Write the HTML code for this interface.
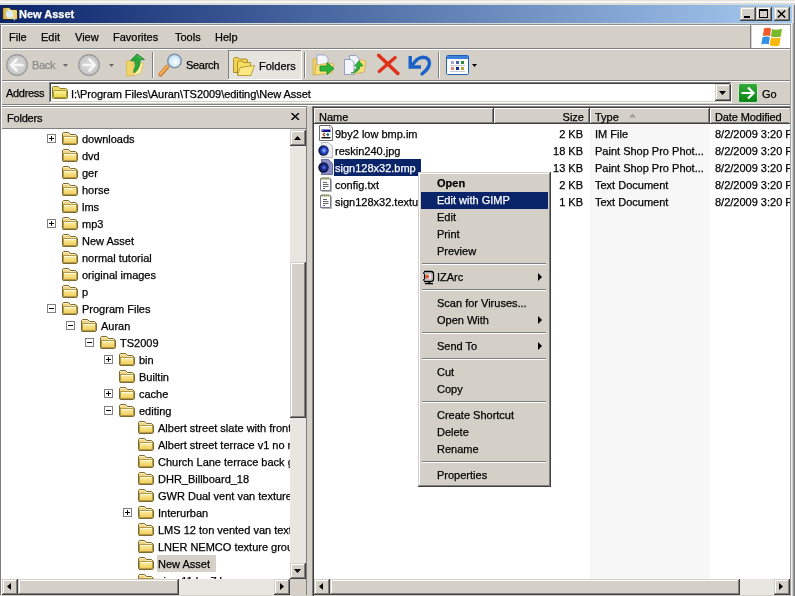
<!DOCTYPE html>
<html><head><meta charset="utf-8">
<style>
*{box-sizing:border-box;margin:0;padding:0}
html,body{width:795px;height:596px;overflow:hidden;background:#d4d0c8;font-family:"Liberation Sans",sans-serif;font-size:11px;color:#000}
.a{position:absolute}
.t{position:absolute;white-space:pre;line-height:13px;will-change:transform;-webkit-text-stroke:0.25px currentColor}
.chk{background:#e8e6e1}
.clip{position:absolute;overflow:hidden}
</style></head><body>
<div class="a" style="left:0px;top:0px;width:795px;height:5px;background:linear-gradient(#e6e2da 0,#e6e2da 1px,#f6f6f2 1px,#f6f6f2 3px,#d6dcda 3px)"></div>
<div class="a" style="left:0px;top:5px;width:792px;height:18px;background:linear-gradient(90deg,#0a246a 0%,#a6caf0 100%)"></div>
<svg class="a" style="left:2px;top:6px" width="16" height="15" viewBox="0 0 16 15"><defs><linearGradient id="tf" x1="0" y1="0" x2="1" y2="0"><stop offset="0" stop-color="#c8a030"/><stop offset="0.5" stop-color="#f6e6a0"/><stop offset="1" stop-color="#e8cc60"/></linearGradient></defs><path d="M0.5 3 L1.5 1.5 L7 1.5 L9 3.5 L14.5 3.5 L15.5 5 L15.5 13.5 L0.5 13.5 Z" fill="url(#tf)" stroke="#1a1a20" stroke-width="0.8"/><circle cx="7.5" cy="8" r="3.6" fill="#d8ecfc"/><path d="M11 12 L13 14" stroke="#c8d0e0" stroke-width="1.5"/></svg>
<div class="t" style="left:19px;top:8px;color:#fff;font-weight:bold">New Asset</div>
<div class="a" style="left:740px;top:7px;width:16px;height:14px;background:#d4d0c8"></div><div class="a" style="left:741px;top:8px;width:13px;height:1px;background:#ffffff"></div><div class="a" style="left:741px;top:8px;width:1px;height:11px;background:#ffffff"></div><div class="a" style="left:740px;top:20px;width:16px;height:1px;background:#404040"></div><div class="a" style="left:755px;top:7px;width:1px;height:14px;background:#404040"></div><div class="a" style="left:741px;top:19px;width:14px;height:1px;background:#808080"></div><div class="a" style="left:754px;top:8px;width:1px;height:12px;background:#808080"></div>
<div class="a" style="left:756px;top:7px;width:16px;height:14px;background:#d4d0c8"></div><div class="a" style="left:757px;top:8px;width:13px;height:1px;background:#ffffff"></div><div class="a" style="left:757px;top:8px;width:1px;height:11px;background:#ffffff"></div><div class="a" style="left:756px;top:20px;width:16px;height:1px;background:#404040"></div><div class="a" style="left:771px;top:7px;width:1px;height:14px;background:#404040"></div><div class="a" style="left:757px;top:19px;width:14px;height:1px;background:#808080"></div><div class="a" style="left:770px;top:8px;width:1px;height:12px;background:#808080"></div>
<div class="a" style="left:774px;top:7px;width:16px;height:14px;background:#d4d0c8"></div><div class="a" style="left:775px;top:8px;width:13px;height:1px;background:#ffffff"></div><div class="a" style="left:775px;top:8px;width:1px;height:11px;background:#ffffff"></div><div class="a" style="left:774px;top:20px;width:16px;height:1px;background:#404040"></div><div class="a" style="left:789px;top:7px;width:1px;height:14px;background:#404040"></div><div class="a" style="left:775px;top:19px;width:14px;height:1px;background:#808080"></div><div class="a" style="left:788px;top:8px;width:1px;height:12px;background:#808080"></div>
<div class="a" style="left:744px;top:16px;width:6px;height:2px;background:#000"></div>
<div class="a" style="left:759px;top:9px;width:9px;height:9px;border:1px solid #000;border-top-width:2px"></div>
<svg class="a" style="left:777px;top:10px" width="10" height="8" viewBox="0 0 10 8"><path d="M0.8 0.5 L8.2 7.5 M8.2 0.5 L0.8 7.5" stroke="#000" stroke-width="1.5"/></svg>
<div class="a" style="left:790px;top:23px;width:5px;height:573px;background:linear-gradient(90deg,#a0a09e 0,#a0a09e 1px,#eeeeec 1px,#eeeeec 2px,#d0d0ce 2px,#c4c4c2 3px,#787878 4px)"></div>
<div class="a" style="left:792px;top:5px;width:3px;height:18px;background:linear-gradient(90deg,#e2e6ea 0,#e2e6ea 1px,#c8ccd0 1px,#c8ccd0 2px,#787878 2px)"></div>
<div class="a" style="left:0px;top:23px;width:1px;height:573px;background:#7c7c7c"></div>
<div class="a" style="left:1px;top:25px;width:1px;height:571px;background:#fff"></div>
<div class="a" style="left:0px;top:23px;width:791px;height:1px;background:#d0d8d8"></div>
<div class="a" style="left:0px;top:24px;width:791px;height:1px;background:#8c9090"></div>
<div class="a" style="left:2px;top:25px;width:788px;height:1px;background:#fff"></div>
<div class="a" style="left:2px;top:48px;width:788px;height:1px;background:#808080"></div>
<div class="a" style="left:2px;top:49px;width:788px;height:1px;background:#fff"></div>
<div class="t" style="left:9px;top:31px;">File</div>
<div class="t" style="left:41px;top:31px;">Edit</div>
<div class="t" style="left:75px;top:31px;">View</div>
<div class="t" style="left:113px;top:31px;">Favorites</div>
<div class="t" style="left:175px;top:31px;">Tools</div>
<div class="t" style="left:215px;top:31px;">Help</div>
<div class="a" style="left:750px;top:25px;width:1px;height:24px;background:#808080"></div>
<div class="a" style="left:752px;top:25px;width:38px;height:23px;background:#fff"></div>
<svg class="a" style="left:760px;top:27px" width="23" height="20" viewBox="0 0 23 20"><path d="M4 1.5 Q7.5 0 11 1.5 L10 9 Q6.5 7.8 2.8 9 Z" fill="#f05a28"/><path d="M12 2 Q15.5 3.5 22 1.8 L20.8 9.6 Q15.5 11 11 9.6 Z" fill="#79b829"/><path d="M2.6 10 Q6.5 8.8 9.8 10 L8.8 17.5 Q5 16.2 1.2 17.5 Z" fill="#3490e0"/><path d="M10.8 10.6 Q15.5 12 20.6 10.5 L19.4 18.5 Q14.5 20 9.8 18.2 Z" fill="#f9b90c"/></svg>
<div class="a" style="left:2px;top:80px;width:788px;height:1px;background:#808080"></div>
<div class="a" style="left:2px;top:81px;width:788px;height:1px;background:#fff"></div>
<svg class="a" style="left:6px;top:54px" width="22" height="22" viewBox="0 0 22 22"><defs><radialGradient id="gb" cx="50%" cy="50%" r="55%"><stop offset="0" stop-color="#dcdcdc"/><stop offset="0.75" stop-color="#cacaca"/><stop offset="1" stop-color="#a4a4a4"/></radialGradient></defs><circle cx="11" cy="11" r="10.4" fill="url(#gb)" stroke="#9a9a9a" stroke-width="1.1"/><path d="M10.5 5.5 L5.2 11 L10.5 16.5 M6 11 L16.5 11" stroke="#f6f6f6" stroke-width="2.6" fill="none" stroke-linecap="round" stroke-linejoin="round"/></svg>
<div class="t" style="left:32px;top:59px;color:#8a8a8a;letter-spacing:-0.3px">Back</div>
<svg class="a" style="left:63px;top:64px" width="6" height="4"><path d="M0 0 L5 0 L2.5 3 Z" fill="#6a6a6a"/></svg>
<svg class="a" style="left:78px;top:54px" width="22" height="22" viewBox="0 0 22 22"><circle cx="11" cy="11" r="10.4" fill="url(#gb)" stroke="#9a9a9a" stroke-width="1.1"/><path d="M11.5 5.5 L16.8 11 L11.5 16.5 M16 11 L5.5 11" stroke="#f6f6f6" stroke-width="2.6" fill="none" stroke-linecap="round" stroke-linejoin="round"/></svg>
<svg class="a" style="left:109px;top:64px" width="6" height="4"><path d="M0 0 L5 0 L2.5 3 Z" fill="#6a6a6a"/></svg>
<svg class="a" style="left:120px;top:50px" width="30" height="30" viewBox="0 0 30 30"><path d="M6 11.5 L11 10.5 L14 12.5 L14.5 25 L7 26.5 Z" fill="#f0d468" stroke="#d4b040" stroke-width="0.7"/><path d="M13.5 13.5 L23.5 13 L20.5 23.5 L13.5 25.5 Z" fill="#fbeea0" stroke="#d8bc50" stroke-width="0.7"/><path d="M10.5 10.5 L17 4 L24.5 9.5 L20 10 Q20.5 18 14.5 23 L13.5 21.5 Q16 17 15 11 Z" fill="#28a838" stroke="#187a22" stroke-width="0.7"/><path d="M17 5.5 L21.5 9" stroke="#70d070" stroke-width="0.8"/></svg>
<div class="a" style="left:152px;top:52px;width:1px;height:26px;background:#808080"></div>
<div class="a" style="left:153px;top:52px;width:1px;height:26px;background:#fff"></div>
<svg class="a" style="left:155px;top:50px" width="32" height="30" viewBox="0 0 32 30"><defs><radialGradient id="gl" cx="55%" cy="55%" r="60%"><stop offset="0" stop-color="#ffffff"/><stop offset="1" stop-color="#b0dcf4"/></radialGradient></defs><path d="M5.5 24.5 L12 17" stroke="#c87838" stroke-width="4.2" stroke-linecap="round"/><path d="M5.5 24 L12 16.5" stroke="#f4b050" stroke-width="2.4" stroke-linecap="round"/><circle cx="19.5" cy="11" r="6.8" fill="url(#gl)" stroke="#8496a8" stroke-width="1.6"/></svg>
<div class="t" style="left:186px;top:59px;letter-spacing:-0.3px">Search</div>
<div class="a" style="left:228px;top:50px;width:74px;height:30px;background:#e6e4df"></div>
<div class="a" style="left:228px;top:50px;width:74px;height:1px;background:#808080"></div>
<div class="a" style="left:228px;top:50px;width:1px;height:30px;background:#808080"></div>
<div class="a" style="left:228px;top:79px;width:74px;height:1px;background:#fff"></div>
<div class="a" style="left:301px;top:50px;width:1px;height:30px;background:#fff"></div>
<svg class="a" style="left:228px;top:50px" width="32" height="30" viewBox="0 0 32 30"><path d="M5.5 8.5 L6.5 7.5 L10 7.5 L11.5 9 L18.5 9 L19.5 10 L19.5 22.5 L5.5 22.5 Z" fill="#f2d050" stroke="#a88828" stroke-width="0.9"/><path d="M9.5 12 L10.5 11 L14 11 L15.5 12.5 L22.5 12.5 L22.5 25.5 L9.5 25.5 Z" fill="#f6dc60" stroke="#a88828" stroke-width="0.9"/><path d="M12 17.5 L26.5 15.5 L23 25.5 L9.5 25.5 Z" fill="#fbea84" stroke="#b89838" stroke-width="0.9"/></svg>
<div class="t" style="left:259px;top:60px;">Folders</div>
<div class="a" style="left:304px;top:52px;width:1px;height:26px;background:#808080"></div>
<div class="a" style="left:305px;top:52px;width:1px;height:26px;background:#fff"></div>
<svg class="a" style="left:312px;top:53px" width="24" height="24" viewBox="0 0 24 24"><path d="M1 6 L5 5 L5 21 L1 22 Z" fill="#f0d060" stroke="#c8a040" stroke-width="0.6"/><path d="M5 2 L13 2 L16 5 L16 17 L5 17 Z" fill="#f4f6fc" stroke="#90a0c8" stroke-width="0.8"/><path d="M4 12 L18 10 L22 11 L20 20 L3 22 Z" fill="#f6e07a" stroke="#c8a040" stroke-width="0.6"/><path d="M8 13 L15 13 L15 9.5 L22 15.5 L15 21.5 L15 18 L8 18 Z" fill="#2cb43c" stroke="#168a22" stroke-width="0.8"/></svg>
<svg class="a" style="left:343px;top:53px" width="24" height="24" viewBox="0 0 24 24"><path d="M11 8 L19 7 L23 8 L21 19 L10 21 Z" fill="#f6e07a" stroke="#c8a040" stroke-width="0.6"/><path d="M6.5 2.5 L13 2.5 L16 5.5 L16 16.5 L6.5 16.5 Z" fill="#eef2fa" stroke="#8090b8" stroke-width="0.8"/><path d="M1.5 6.5 L8 6.5 L11 9.5 L11 21.5 L1.5 21.5 Z" fill="#f4f6fc" stroke="#8090b8" stroke-width="0.8"/><path d="M8 20 Q13 19 14 13 L11.5 13 L16 8 L20 13 L17 13 Q16 20 8 20 Z" fill="#2cb43c" stroke="#168a22" stroke-width="0.7"/></svg>
<svg class="a" style="left:370px;top:50px" width="34" height="30" viewBox="0 0 34 30"><path d="M8.8 5.5 L27.8 23.5" stroke="#e03018" stroke-width="3.6" stroke-linecap="round"/><path d="M25.2 7.5 L9.2 21.5" stroke="#e03018" stroke-width="3.2" stroke-linecap="round"/></svg>
<svg class="a" style="left:400px;top:50px" width="32" height="30" viewBox="0 0 32 30"><path d="M12.5 15 Q17 7.5 23 7.2 Q29.5 7.5 29.5 13.5 Q29 18.5 22 24" stroke="#1a62c8" stroke-width="3.4" fill="none" stroke-linecap="round"/><path d="M10.2 6 L10.2 17 L21 17" stroke="#1a62c8" stroke-width="3.4" fill="none" stroke-linejoin="miter" stroke-linecap="butt"/></svg>
<div class="a" style="left:438px;top:52px;width:1px;height:26px;background:#808080"></div>
<div class="a" style="left:439px;top:52px;width:1px;height:26px;background:#fff"></div>
<svg class="a" style="left:446px;top:55px" width="24" height="21" viewBox="0 0 24 21"><rect x="0.5" y="0.5" width="22" height="19" rx="1" fill="#fff" stroke="#2060b8"/><rect x="1" y="1" width="21" height="3" fill="#3c82dc"/><rect x="5" y="6" width="3" height="3" fill="#a8a8c8"/><rect x="10" y="6" width="3" height="3" fill="#4a68a8"/><rect x="15" y="6" width="3" height="3" fill="#2a8a3a"/><rect x="5" y="12" width="3" height="3" fill="#e88878"/><rect x="10" y="12" width="3" height="3" fill="#142a8a"/><rect x="15" y="12" width="3" height="3" fill="#b8a838"/><rect x="4" y="10" width="5" height="1" fill="#c8c8d8"/><rect x="9" y="10" width="5" height="1" fill="#c8c8d8"/><rect x="14" y="10" width="5" height="1" fill="#c8c8d8"/><rect x="4" y="16" width="5" height="1" fill="#c8c8d8"/><rect x="9" y="16" width="5" height="1" fill="#c8c8d8"/><rect x="14" y="16" width="5" height="1" fill="#c8c8d8"/></svg>
<svg class="a" style="left:472px;top:64px" width="6" height="4"><path d="M0 0 L5 0 L2.5 3 Z" fill="#000"/></svg>
<div class="a" style="left:2px;top:104px;width:788px;height:1px;background:#808080"></div>
<div class="a" style="left:2px;top:105px;width:788px;height:1px;background:#fff"></div>
<div class="t" style="left:6px;top:87px;letter-spacing:-0.3px">Address</div>
<div class="a" style="left:49px;top:82px;width:683px;height:21px;background:#fff;border-style:solid;border-width:1px;border-color:#808080 #fff #fff #808080"></div>
<div class="a" style="left:50px;top:83px;width:681px;height:1px;background:#404040"></div>
<div class="a" style="left:50px;top:83px;width:1px;height:19px;background:#404040"></div>
<div class="a" style="left:50px;top:101px;width:681px;height:1px;background:#d4d0c8"></div>
<div class="a" style="left:730px;top:83px;width:1px;height:19px;background:#d4d0c8"></div>
<svg class="a" style="left:52px;top:86px" width="16" height="13" viewBox="0 0 16 13"><defs><linearGradient id="fa" x1="0" y1="0" x2="0" y2="1"><stop offset="0" stop-color="#fbf4a0"/><stop offset="1" stop-color="#ecd444"/></linearGradient></defs><path d="M1.5 12.5 Q0.5 12.5 0.5 11.5 L0.5 1.5 Q0.5 0.5 1.5 0.5 L6 0.5 L8 2.5 L13.5 2.5 Q15.5 3 15.5 5 L15.5 11 Q15.5 12.5 14 12.5 Z" fill="#f0dc68" stroke="#8a8030"/><rect x="1.5" y="4.5" width="13" height="7" rx="1" fill="url(#fa)" stroke="#a89838"/></svg>
<div class="t" style="left:71px;top:88px;letter-spacing:-0.05px">I:\Program Files\Auran\TS2009\editing\New Asset</div>
<div class="a" style="left:715px;top:84px;width:16px;height:17px;background:#d4d0c8"></div><div class="a" style="left:716px;top:85px;width:13px;height:1px;background:#ffffff"></div><div class="a" style="left:716px;top:85px;width:1px;height:14px;background:#ffffff"></div><div class="a" style="left:715px;top:100px;width:16px;height:1px;background:#404040"></div><div class="a" style="left:730px;top:84px;width:1px;height:17px;background:#404040"></div><div class="a" style="left:716px;top:99px;width:14px;height:1px;background:#808080"></div><div class="a" style="left:729px;top:85px;width:1px;height:15px;background:#808080"></div>
<svg class="a" style="left:719px;top:91px" width="8" height="5"><path d="M0 0 L7 0 L3.5 4 Z" fill="#000"/></svg>
<svg class="a" style="left:738px;top:83px" width="20" height="20" viewBox="0 0 20 20"><defs><linearGradient id="gg" x1="0" y1="0" x2="0" y2="1"><stop offset="0" stop-color="#38aa3c"/><stop offset="1" stop-color="#088414"/></linearGradient></defs><rect x="0.5" y="0.5" width="19" height="19" rx="2" fill="url(#gg)" stroke="#d0ecd0"/><path d="M3.5 10 L15 10 M10 4.5 L15.5 10 L10 15.5" stroke="#fff" stroke-width="2.2" fill="none"/></svg>
<div class="t" style="left:762px;top:88px;">Go</div>
<div class="a" style="left:2px;top:106px;width:305px;height:23px;background:#d4d0c8"></div>
<div class="a" style="left:2px;top:106px;width:304px;height:1px;background:#808080"></div>
<div class="a" style="left:2px;top:107px;width:304px;height:1px;background:#fff"></div>
<div class="a" style="left:2px;top:128px;width:305px;height:1px;background:#808080"></div>
<div class="a" style="left:306px;top:106px;width:1px;height:23px;background:#808080"></div>
<div class="t" style="left:7px;top:112px;letter-spacing:-0.2px">Folders</div>
<svg class="a" style="left:291px;top:113px" width="9" height="7" viewBox="0 0 9 7"><path d="M0.5 0 L8 7 M8 0 L0.5 7" stroke="#000" stroke-width="1.4"/></svg>
<div class="a" style="left:2px;top:129px;width:288px;height:450px;background:#fff"></div>
<div class="a" style="left:306px;top:129px;width:1px;height:467px;background:#808080"></div>
<svg width="0" height="0" style="position:absolute"><defs><linearGradient id="fy" x1="0" y1="0" x2="0" y2="1"><stop offset="0" stop-color="#fdf0a8"/><stop offset="1" stop-color="#efcc58"/></linearGradient></defs></svg>
<div class="clip" style="left:2px;top:129px;width:288px;height:450px"><div class="a" style="left:-2px;top:-129px;width:795px;height:596px"><div class="a" style="left:47px;top:134px;width:9px;height:9px;background:#fff;border:1px solid #808080"></div><div class="a" style="left:49px;top:138px;width:5px;height:1px;background:#000"></div><div class="a" style="left:51px;top:136px;width:1px;height:5px;background:#000"></div>
<svg class="a" style="left:62px;top:132px" width="16" height="13" viewBox="0 0 16 13"><path d="M1 12.5 L0.5 11.5 L0.5 1.5 L1.5 0.5 L6.5 0.5 L8.5 2.5 L13.5 2.5 L15.5 4.5 L15.5 11.5 L14.5 12.5 Z" fill="#eed484" stroke="#7c6a30"/><path d="M1.5 1.5 L6 1.5 L8 3.5 L13.5 3.5" stroke="#fbf0c0" fill="none"/><rect x="1.5" y="4.5" width="13" height="7" fill="url(#fy)" stroke="#b49a48"/><path d="M2 5.5 L14 5.5" stroke="#fffbe0"/></svg>
<div class="t" style="left:82px;top:133px;">downloads</div>
<svg class="a" style="left:62px;top:149px" width="16" height="13" viewBox="0 0 16 13"><path d="M1 12.5 L0.5 11.5 L0.5 1.5 L1.5 0.5 L6.5 0.5 L8.5 2.5 L13.5 2.5 L15.5 4.5 L15.5 11.5 L14.5 12.5 Z" fill="#eed484" stroke="#7c6a30"/><path d="M1.5 1.5 L6 1.5 L8 3.5 L13.5 3.5" stroke="#fbf0c0" fill="none"/><rect x="1.5" y="4.5" width="13" height="7" fill="url(#fy)" stroke="#b49a48"/><path d="M2 5.5 L14 5.5" stroke="#fffbe0"/></svg>
<div class="t" style="left:82px;top:150px;">dvd</div>
<svg class="a" style="left:62px;top:166px" width="16" height="13" viewBox="0 0 16 13"><path d="M1 12.5 L0.5 11.5 L0.5 1.5 L1.5 0.5 L6.5 0.5 L8.5 2.5 L13.5 2.5 L15.5 4.5 L15.5 11.5 L14.5 12.5 Z" fill="#eed484" stroke="#7c6a30"/><path d="M1.5 1.5 L6 1.5 L8 3.5 L13.5 3.5" stroke="#fbf0c0" fill="none"/><rect x="1.5" y="4.5" width="13" height="7" fill="url(#fy)" stroke="#b49a48"/><path d="M2 5.5 L14 5.5" stroke="#fffbe0"/></svg>
<div class="t" style="left:82px;top:167px;">ger</div>
<svg class="a" style="left:62px;top:183px" width="16" height="13" viewBox="0 0 16 13"><path d="M1 12.5 L0.5 11.5 L0.5 1.5 L1.5 0.5 L6.5 0.5 L8.5 2.5 L13.5 2.5 L15.5 4.5 L15.5 11.5 L14.5 12.5 Z" fill="#eed484" stroke="#7c6a30"/><path d="M1.5 1.5 L6 1.5 L8 3.5 L13.5 3.5" stroke="#fbf0c0" fill="none"/><rect x="1.5" y="4.5" width="13" height="7" fill="url(#fy)" stroke="#b49a48"/><path d="M2 5.5 L14 5.5" stroke="#fffbe0"/></svg>
<div class="t" style="left:82px;top:184px;">horse</div>
<svg class="a" style="left:62px;top:200px" width="16" height="13" viewBox="0 0 16 13"><path d="M1 12.5 L0.5 11.5 L0.5 1.5 L1.5 0.5 L6.5 0.5 L8.5 2.5 L13.5 2.5 L15.5 4.5 L15.5 11.5 L14.5 12.5 Z" fill="#eed484" stroke="#7c6a30"/><path d="M1.5 1.5 L6 1.5 L8 3.5 L13.5 3.5" stroke="#fbf0c0" fill="none"/><rect x="1.5" y="4.5" width="13" height="7" fill="url(#fy)" stroke="#b49a48"/><path d="M2 5.5 L14 5.5" stroke="#fffbe0"/></svg>
<div class="t" style="left:82px;top:201px;">lms</div>
<div class="a" style="left:47px;top:219px;width:9px;height:9px;background:#fff;border:1px solid #808080"></div><div class="a" style="left:49px;top:223px;width:5px;height:1px;background:#000"></div><div class="a" style="left:51px;top:221px;width:1px;height:5px;background:#000"></div>
<svg class="a" style="left:62px;top:217px" width="16" height="13" viewBox="0 0 16 13"><path d="M1 12.5 L0.5 11.5 L0.5 1.5 L1.5 0.5 L6.5 0.5 L8.5 2.5 L13.5 2.5 L15.5 4.5 L15.5 11.5 L14.5 12.5 Z" fill="#eed484" stroke="#7c6a30"/><path d="M1.5 1.5 L6 1.5 L8 3.5 L13.5 3.5" stroke="#fbf0c0" fill="none"/><rect x="1.5" y="4.5" width="13" height="7" fill="url(#fy)" stroke="#b49a48"/><path d="M2 5.5 L14 5.5" stroke="#fffbe0"/></svg>
<div class="t" style="left:82px;top:218px;">mp3</div>
<svg class="a" style="left:62px;top:234px" width="16" height="13" viewBox="0 0 16 13"><path d="M1 12.5 L0.5 11.5 L0.5 1.5 L1.5 0.5 L6.5 0.5 L8.5 2.5 L13.5 2.5 L15.5 4.5 L15.5 11.5 L14.5 12.5 Z" fill="#eed484" stroke="#7c6a30"/><path d="M1.5 1.5 L6 1.5 L8 3.5 L13.5 3.5" stroke="#fbf0c0" fill="none"/><rect x="1.5" y="4.5" width="13" height="7" fill="url(#fy)" stroke="#b49a48"/><path d="M2 5.5 L14 5.5" stroke="#fffbe0"/></svg>
<div class="t" style="left:82px;top:235px;">New Asset</div>
<svg class="a" style="left:62px;top:251px" width="16" height="13" viewBox="0 0 16 13"><path d="M1 12.5 L0.5 11.5 L0.5 1.5 L1.5 0.5 L6.5 0.5 L8.5 2.5 L13.5 2.5 L15.5 4.5 L15.5 11.5 L14.5 12.5 Z" fill="#eed484" stroke="#7c6a30"/><path d="M1.5 1.5 L6 1.5 L8 3.5 L13.5 3.5" stroke="#fbf0c0" fill="none"/><rect x="1.5" y="4.5" width="13" height="7" fill="url(#fy)" stroke="#b49a48"/><path d="M2 5.5 L14 5.5" stroke="#fffbe0"/></svg>
<div class="t" style="left:82px;top:252px;">normal tutorial</div>
<svg class="a" style="left:62px;top:268px" width="16" height="13" viewBox="0 0 16 13"><path d="M1 12.5 L0.5 11.5 L0.5 1.5 L1.5 0.5 L6.5 0.5 L8.5 2.5 L13.5 2.5 L15.5 4.5 L15.5 11.5 L14.5 12.5 Z" fill="#eed484" stroke="#7c6a30"/><path d="M1.5 1.5 L6 1.5 L8 3.5 L13.5 3.5" stroke="#fbf0c0" fill="none"/><rect x="1.5" y="4.5" width="13" height="7" fill="url(#fy)" stroke="#b49a48"/><path d="M2 5.5 L14 5.5" stroke="#fffbe0"/></svg>
<div class="t" style="left:82px;top:269px;">original images</div>
<svg class="a" style="left:62px;top:285px" width="16" height="13" viewBox="0 0 16 13"><path d="M1 12.5 L0.5 11.5 L0.5 1.5 L1.5 0.5 L6.5 0.5 L8.5 2.5 L13.5 2.5 L15.5 4.5 L15.5 11.5 L14.5 12.5 Z" fill="#eed484" stroke="#7c6a30"/><path d="M1.5 1.5 L6 1.5 L8 3.5 L13.5 3.5" stroke="#fbf0c0" fill="none"/><rect x="1.5" y="4.5" width="13" height="7" fill="url(#fy)" stroke="#b49a48"/><path d="M2 5.5 L14 5.5" stroke="#fffbe0"/></svg>
<div class="t" style="left:82px;top:286px;">p</div>
<div class="a" style="left:47px;top:304px;width:9px;height:9px;background:#fff;border:1px solid #808080"></div><div class="a" style="left:49px;top:308px;width:5px;height:1px;background:#000"></div>
<svg class="a" style="left:62px;top:302px" width="16" height="13" viewBox="0 0 16 13"><path d="M1 12.5 L0.5 11.5 L0.5 1.5 L1.5 0.5 L6.5 0.5 L8.5 2.5 L13.5 2.5 L15.5 4.5 L15.5 11.5 L14.5 12.5 Z" fill="#eed484" stroke="#7c6a30"/><path d="M1.5 1.5 L6 1.5 L8 3.5 L13.5 3.5" stroke="#fbf0c0" fill="none"/><rect x="1.5" y="4.5" width="13" height="7" fill="url(#fy)" stroke="#b49a48"/><path d="M2 5.5 L14 5.5" stroke="#fffbe0"/></svg>
<div class="t" style="left:82px;top:303px;">Program Files</div>
<div class="a" style="left:66px;top:321px;width:9px;height:9px;background:#fff;border:1px solid #808080"></div><div class="a" style="left:68px;top:325px;width:5px;height:1px;background:#000"></div>
<svg class="a" style="left:81px;top:319px" width="16" height="13" viewBox="0 0 16 13"><path d="M1 12.5 L0.5 11.5 L0.5 1.5 L1.5 0.5 L6.5 0.5 L8.5 2.5 L13.5 2.5 L15.5 4.5 L15.5 11.5 L14.5 12.5 Z" fill="#eed484" stroke="#7c6a30"/><path d="M1.5 1.5 L6 1.5 L8 3.5 L13.5 3.5" stroke="#fbf0c0" fill="none"/><rect x="1.5" y="4.5" width="13" height="7" fill="url(#fy)" stroke="#b49a48"/><path d="M2 5.5 L14 5.5" stroke="#fffbe0"/></svg>
<div class="t" style="left:101px;top:320px;">Auran</div>
<div class="a" style="left:85px;top:338px;width:9px;height:9px;background:#fff;border:1px solid #808080"></div><div class="a" style="left:87px;top:342px;width:5px;height:1px;background:#000"></div>
<svg class="a" style="left:100px;top:336px" width="16" height="13" viewBox="0 0 16 13"><path d="M1 12.5 L0.5 11.5 L0.5 1.5 L1.5 0.5 L6.5 0.5 L8.5 2.5 L13.5 2.5 L15.5 4.5 L15.5 11.5 L14.5 12.5 Z" fill="#eed484" stroke="#7c6a30"/><path d="M1.5 1.5 L6 1.5 L8 3.5 L13.5 3.5" stroke="#fbf0c0" fill="none"/><rect x="1.5" y="4.5" width="13" height="7" fill="url(#fy)" stroke="#b49a48"/><path d="M2 5.5 L14 5.5" stroke="#fffbe0"/></svg>
<div class="t" style="left:120px;top:337px;">TS2009</div>
<div class="a" style="left:104px;top:355px;width:9px;height:9px;background:#fff;border:1px solid #808080"></div><div class="a" style="left:106px;top:359px;width:5px;height:1px;background:#000"></div><div class="a" style="left:108px;top:357px;width:1px;height:5px;background:#000"></div>
<svg class="a" style="left:119px;top:353px" width="16" height="13" viewBox="0 0 16 13"><path d="M1 12.5 L0.5 11.5 L0.5 1.5 L1.5 0.5 L6.5 0.5 L8.5 2.5 L13.5 2.5 L15.5 4.5 L15.5 11.5 L14.5 12.5 Z" fill="#eed484" stroke="#7c6a30"/><path d="M1.5 1.5 L6 1.5 L8 3.5 L13.5 3.5" stroke="#fbf0c0" fill="none"/><rect x="1.5" y="4.5" width="13" height="7" fill="url(#fy)" stroke="#b49a48"/><path d="M2 5.5 L14 5.5" stroke="#fffbe0"/></svg>
<div class="t" style="left:139px;top:354px;">bin</div>
<svg class="a" style="left:119px;top:370px" width="16" height="13" viewBox="0 0 16 13"><path d="M1 12.5 L0.5 11.5 L0.5 1.5 L1.5 0.5 L6.5 0.5 L8.5 2.5 L13.5 2.5 L15.5 4.5 L15.5 11.5 L14.5 12.5 Z" fill="#eed484" stroke="#7c6a30"/><path d="M1.5 1.5 L6 1.5 L8 3.5 L13.5 3.5" stroke="#fbf0c0" fill="none"/><rect x="1.5" y="4.5" width="13" height="7" fill="url(#fy)" stroke="#b49a48"/><path d="M2 5.5 L14 5.5" stroke="#fffbe0"/></svg>
<div class="t" style="left:139px;top:371px;">Builtin</div>
<div class="a" style="left:104px;top:389px;width:9px;height:9px;background:#fff;border:1px solid #808080"></div><div class="a" style="left:106px;top:393px;width:5px;height:1px;background:#000"></div><div class="a" style="left:108px;top:391px;width:1px;height:5px;background:#000"></div>
<svg class="a" style="left:119px;top:387px" width="16" height="13" viewBox="0 0 16 13"><path d="M1 12.5 L0.5 11.5 L0.5 1.5 L1.5 0.5 L6.5 0.5 L8.5 2.5 L13.5 2.5 L15.5 4.5 L15.5 11.5 L14.5 12.5 Z" fill="#eed484" stroke="#7c6a30"/><path d="M1.5 1.5 L6 1.5 L8 3.5 L13.5 3.5" stroke="#fbf0c0" fill="none"/><rect x="1.5" y="4.5" width="13" height="7" fill="url(#fy)" stroke="#b49a48"/><path d="M2 5.5 L14 5.5" stroke="#fffbe0"/></svg>
<div class="t" style="left:139px;top:388px;">cache</div>
<div class="a" style="left:104px;top:406px;width:9px;height:9px;background:#fff;border:1px solid #808080"></div><div class="a" style="left:106px;top:410px;width:5px;height:1px;background:#000"></div>
<svg class="a" style="left:119px;top:404px" width="16" height="13" viewBox="0 0 16 13"><path d="M1 12.5 L0.5 11.5 L0.5 1.5 L1.5 0.5 L6.5 0.5 L8.5 2.5 L13.5 2.5 L15.5 4.5 L15.5 11.5 L14.5 12.5 Z" fill="#eed484" stroke="#7c6a30"/><path d="M1.5 1.5 L6 1.5 L8 3.5 L13.5 3.5" stroke="#fbf0c0" fill="none"/><rect x="1.5" y="4.5" width="13" height="7" fill="url(#fy)" stroke="#b49a48"/><path d="M2 5.5 L14 5.5" stroke="#fffbe0"/></svg>
<div class="t" style="left:139px;top:405px;">editing</div>
<svg class="a" style="left:138px;top:421px" width="16" height="13" viewBox="0 0 16 13"><path d="M1 12.5 L0.5 11.5 L0.5 1.5 L1.5 0.5 L6.5 0.5 L8.5 2.5 L13.5 2.5 L15.5 4.5 L15.5 11.5 L14.5 12.5 Z" fill="#eed484" stroke="#7c6a30"/><path d="M1.5 1.5 L6 1.5 L8 3.5 L13.5 3.5" stroke="#fbf0c0" fill="none"/><rect x="1.5" y="4.5" width="13" height="7" fill="url(#fy)" stroke="#b49a48"/><path d="M2 5.5 L14 5.5" stroke="#fffbe0"/></svg>
<div class="t" style="left:158px;top:422px;">Albert street slate with front</div>
<svg class="a" style="left:138px;top:438px" width="16" height="13" viewBox="0 0 16 13"><path d="M1 12.5 L0.5 11.5 L0.5 1.5 L1.5 0.5 L6.5 0.5 L8.5 2.5 L13.5 2.5 L15.5 4.5 L15.5 11.5 L14.5 12.5 Z" fill="#eed484" stroke="#7c6a30"/><path d="M1.5 1.5 L6 1.5 L8 3.5 L13.5 3.5" stroke="#fbf0c0" fill="none"/><rect x="1.5" y="4.5" width="13" height="7" fill="url(#fy)" stroke="#b49a48"/><path d="M2 5.5 L14 5.5" stroke="#fffbe0"/></svg>
<div class="t" style="left:158px;top:439px;">Albert street terrace v1 no roof</div>
<svg class="a" style="left:138px;top:455px" width="16" height="13" viewBox="0 0 16 13"><path d="M1 12.5 L0.5 11.5 L0.5 1.5 L1.5 0.5 L6.5 0.5 L8.5 2.5 L13.5 2.5 L15.5 4.5 L15.5 11.5 L14.5 12.5 Z" fill="#eed484" stroke="#7c6a30"/><path d="M1.5 1.5 L6 1.5 L8 3.5 L13.5 3.5" stroke="#fbf0c0" fill="none"/><rect x="1.5" y="4.5" width="13" height="7" fill="url(#fy)" stroke="#b49a48"/><path d="M2 5.5 L14 5.5" stroke="#fffbe0"/></svg>
<div class="t" style="left:158px;top:456px;">Church Lane terrace back garden</div>
<svg class="a" style="left:138px;top:472px" width="16" height="13" viewBox="0 0 16 13"><path d="M1 12.5 L0.5 11.5 L0.5 1.5 L1.5 0.5 L6.5 0.5 L8.5 2.5 L13.5 2.5 L15.5 4.5 L15.5 11.5 L14.5 12.5 Z" fill="#eed484" stroke="#7c6a30"/><path d="M1.5 1.5 L6 1.5 L8 3.5 L13.5 3.5" stroke="#fbf0c0" fill="none"/><rect x="1.5" y="4.5" width="13" height="7" fill="url(#fy)" stroke="#b49a48"/><path d="M2 5.5 L14 5.5" stroke="#fffbe0"/></svg>
<div class="t" style="left:158px;top:473px;">DHR_Billboard_18</div>
<svg class="a" style="left:138px;top:489px" width="16" height="13" viewBox="0 0 16 13"><path d="M1 12.5 L0.5 11.5 L0.5 1.5 L1.5 0.5 L6.5 0.5 L8.5 2.5 L13.5 2.5 L15.5 4.5 L15.5 11.5 L14.5 12.5 Z" fill="#eed484" stroke="#7c6a30"/><path d="M1.5 1.5 L6 1.5 L8 3.5 L13.5 3.5" stroke="#fbf0c0" fill="none"/><rect x="1.5" y="4.5" width="13" height="7" fill="url(#fy)" stroke="#b49a48"/><path d="M2 5.5 L14 5.5" stroke="#fffbe0"/></svg>
<div class="t" style="left:158px;top:490px;">GWR Dual vent van texture</div>
<div class="a" style="left:123px;top:508px;width:9px;height:9px;background:#fff;border:1px solid #808080"></div><div class="a" style="left:125px;top:512px;width:5px;height:1px;background:#000"></div><div class="a" style="left:127px;top:510px;width:1px;height:5px;background:#000"></div>
<svg class="a" style="left:138px;top:506px" width="16" height="13" viewBox="0 0 16 13"><path d="M1 12.5 L0.5 11.5 L0.5 1.5 L1.5 0.5 L6.5 0.5 L8.5 2.5 L13.5 2.5 L15.5 4.5 L15.5 11.5 L14.5 12.5 Z" fill="#eed484" stroke="#7c6a30"/><path d="M1.5 1.5 L6 1.5 L8 3.5 L13.5 3.5" stroke="#fbf0c0" fill="none"/><rect x="1.5" y="4.5" width="13" height="7" fill="url(#fy)" stroke="#b49a48"/><path d="M2 5.5 L14 5.5" stroke="#fffbe0"/></svg>
<div class="t" style="left:158px;top:507px;">Interurban</div>
<svg class="a" style="left:138px;top:523px" width="16" height="13" viewBox="0 0 16 13"><path d="M1 12.5 L0.5 11.5 L0.5 1.5 L1.5 0.5 L6.5 0.5 L8.5 2.5 L13.5 2.5 L15.5 4.5 L15.5 11.5 L14.5 12.5 Z" fill="#eed484" stroke="#7c6a30"/><path d="M1.5 1.5 L6 1.5 L8 3.5 L13.5 3.5" stroke="#fbf0c0" fill="none"/><rect x="1.5" y="4.5" width="13" height="7" fill="url(#fy)" stroke="#b49a48"/><path d="M2 5.5 L14 5.5" stroke="#fffbe0"/></svg>
<div class="t" style="left:158px;top:524px;">LMS 12 ton vented van texture</div>
<svg class="a" style="left:138px;top:540px" width="16" height="13" viewBox="0 0 16 13"><path d="M1 12.5 L0.5 11.5 L0.5 1.5 L1.5 0.5 L6.5 0.5 L8.5 2.5 L13.5 2.5 L15.5 4.5 L15.5 11.5 L14.5 12.5 Z" fill="#eed484" stroke="#7c6a30"/><path d="M1.5 1.5 L6 1.5 L8 3.5 L13.5 3.5" stroke="#fbf0c0" fill="none"/><rect x="1.5" y="4.5" width="13" height="7" fill="url(#fy)" stroke="#b49a48"/><path d="M2 5.5 L14 5.5" stroke="#fffbe0"/></svg>
<div class="t" style="left:158px;top:541px;">LNER NEMCO texture group</div>
<div class="a" style="left:157px;top:555px;width:59px;height:17px;background:#d4d0c8"></div>
<svg class="a" style="left:138px;top:557px" width="16" height="13" viewBox="0 0 16 13"><path d="M1 12.5 L0.5 11.5 L0.5 1.5 L1.5 0.5 L6.5 0.5 L8.5 2.5 L13.5 2.5 L15.5 4.5 L15.5 11.5 L14.5 12.5 Z" fill="#eed484" stroke="#7c6a30"/><path d="M1.5 1.5 L6 1.5 L8 3.5 L13.5 3.5" stroke="#fbf0c0" fill="none"/><rect x="1.5" y="4.5" width="13" height="7" fill="url(#fy)" stroke="#b49a48"/><path d="M2 5.5 L14 5.5" stroke="#fffbe0"/></svg>
<div class="t" style="left:158px;top:558px;">New Asset</div>
<svg class="a" style="left:138px;top:574px" width="16" height="13" viewBox="0 0 16 13"><path d="M1 12.5 L0.5 11.5 L0.5 1.5 L1.5 0.5 L6.5 0.5 L8.5 2.5 L13.5 2.5 L15.5 4.5 L15.5 11.5 L14.5 12.5 Z" fill="#eed484" stroke="#7c6a30"/><path d="M1.5 1.5 L6 1.5 L8 3.5 L13.5 3.5" stroke="#fbf0c0" fill="none"/><rect x="1.5" y="4.5" width="13" height="7" fill="url(#fy)" stroke="#b49a48"/><path d="M2 5.5 L14 5.5" stroke="#fffbe0"/></svg>
<div class="t" style="left:158px;top:575px;">sign 11 by 7 bmp</div></div></div>
<div class="a chk" style="left:290px;top:129px;width:16px;height:450px;"></div>
<div class="a" style="left:290px;top:130px;width:16px;height:16px;background:#d4d0c8"></div><div class="a" style="left:291px;top:131px;width:13px;height:1px;background:#ffffff"></div><div class="a" style="left:291px;top:131px;width:1px;height:13px;background:#ffffff"></div><div class="a" style="left:290px;top:145px;width:16px;height:1px;background:#404040"></div><div class="a" style="left:305px;top:130px;width:1px;height:16px;background:#404040"></div><div class="a" style="left:291px;top:144px;width:14px;height:1px;background:#808080"></div><div class="a" style="left:304px;top:131px;width:1px;height:14px;background:#808080"></div>
<svg class="a" style="left:294px;top:136px" width="8" height="5"><path d="M3.5 0 L7 4 L0 4 Z" fill="#000"/></svg>
<div class="a" style="left:290px;top:262px;width:16px;height:156px;background:#d4d0c8"></div><div class="a" style="left:291px;top:263px;width:13px;height:1px;background:#ffffff"></div><div class="a" style="left:291px;top:263px;width:1px;height:153px;background:#ffffff"></div><div class="a" style="left:290px;top:417px;width:16px;height:1px;background:#404040"></div><div class="a" style="left:305px;top:262px;width:1px;height:156px;background:#404040"></div><div class="a" style="left:291px;top:416px;width:14px;height:1px;background:#808080"></div><div class="a" style="left:304px;top:263px;width:1px;height:154px;background:#808080"></div>
<div class="a" style="left:290px;top:563px;width:16px;height:16px;background:#d4d0c8"></div><div class="a" style="left:291px;top:564px;width:13px;height:1px;background:#ffffff"></div><div class="a" style="left:291px;top:564px;width:1px;height:13px;background:#ffffff"></div><div class="a" style="left:290px;top:578px;width:16px;height:1px;background:#404040"></div><div class="a" style="left:305px;top:563px;width:1px;height:16px;background:#404040"></div><div class="a" style="left:291px;top:577px;width:14px;height:1px;background:#808080"></div><div class="a" style="left:304px;top:564px;width:1px;height:14px;background:#808080"></div>
<svg class="a" style="left:294px;top:569px" width="8" height="5"><path d="M0 0 L7 0 L3.5 4 Z" fill="#000"/></svg>
<div class="a chk" style="left:2px;top:579px;width:288px;height:16px;"></div>
<div class="a" style="left:2px;top:579px;width:16px;height:16px;background:#d4d0c8"></div><div class="a" style="left:3px;top:580px;width:13px;height:1px;background:#ffffff"></div><div class="a" style="left:3px;top:580px;width:1px;height:13px;background:#ffffff"></div><div class="a" style="left:2px;top:594px;width:16px;height:1px;background:#404040"></div><div class="a" style="left:17px;top:579px;width:1px;height:16px;background:#404040"></div><div class="a" style="left:3px;top:593px;width:14px;height:1px;background:#808080"></div><div class="a" style="left:16px;top:580px;width:1px;height:14px;background:#808080"></div>
<svg class="a" style="left:7px;top:583px" width="5" height="8"><path d="M4 0 L4 7 L0 3.5 Z" fill="#000"/></svg>
<div class="a" style="left:18px;top:579px;width:161px;height:16px;background:#d4d0c8"></div><div class="a" style="left:19px;top:580px;width:158px;height:1px;background:#ffffff"></div><div class="a" style="left:19px;top:580px;width:1px;height:13px;background:#ffffff"></div><div class="a" style="left:18px;top:594px;width:161px;height:1px;background:#404040"></div><div class="a" style="left:178px;top:579px;width:1px;height:16px;background:#404040"></div><div class="a" style="left:19px;top:593px;width:159px;height:1px;background:#808080"></div><div class="a" style="left:177px;top:580px;width:1px;height:14px;background:#808080"></div>
<div class="a" style="left:274px;top:579px;width:16px;height:16px;background:#d4d0c8"></div><div class="a" style="left:275px;top:580px;width:13px;height:1px;background:#ffffff"></div><div class="a" style="left:275px;top:580px;width:1px;height:13px;background:#ffffff"></div><div class="a" style="left:274px;top:594px;width:16px;height:1px;background:#404040"></div><div class="a" style="left:289px;top:579px;width:1px;height:16px;background:#404040"></div><div class="a" style="left:275px;top:593px;width:14px;height:1px;background:#808080"></div><div class="a" style="left:288px;top:580px;width:1px;height:14px;background:#808080"></div>
<svg class="a" style="left:280px;top:583px" width="5" height="8"><path d="M0 0 L4 3.5 L0 7 Z" fill="#000"/></svg>
<div class="a" style="left:290px;top:579px;width:16px;height:16px;background:#d4d0c8"></div>
<div class="a" style="left:0px;top:595px;width:790px;height:1px;background:#d4d0c8"></div>
<div class="a" style="left:307px;top:106px;width:5px;height:490px;background:#d4d0c8"></div>
<div class="a" style="left:312px;top:106px;width:479px;height:1px;background:#808080"></div>
<div class="a" style="left:312px;top:106px;width:1px;height:490px;background:#808080"></div>
<div class="a" style="left:313px;top:107px;width:477px;height:1px;background:#404040"></div>
<div class="a" style="left:313px;top:107px;width:1px;height:489px;background:#404040"></div>
<div class="a" style="left:790px;top:106px;width:1px;height:490px;background:#a0a09e"></div>
<div class="a" style="left:314px;top:108px;width:476px;height:471px;background:#fff"></div>
<div class="a" style="left:590px;top:124px;width:120px;height:455px;background:#f7f7f7"></div>

<div class="a" style="left:314px;top:108px;width:180px;height:16px;background:#d4d0c8"></div>
<div class="a" style="left:314px;top:108px;width:179px;height:1px;background:#fff"></div>
<div class="a" style="left:314px;top:108px;width:1px;height:15px;background:#fff"></div>
<div class="a" style="left:314px;top:123px;width:180px;height:1px;background:#404040"></div>
<div class="a" style="left:315px;top:122px;width:178px;height:1px;background:#808080"></div>
<div class="a" style="left:493px;top:108px;width:1px;height:16px;background:#404040"></div>
<div class="a" style="left:492px;top:109px;width:1px;height:14px;background:#808080"></div>

<div class="a" style="left:494px;top:108px;width:96px;height:16px;background:#d4d0c8"></div>
<div class="a" style="left:494px;top:108px;width:95px;height:1px;background:#fff"></div>
<div class="a" style="left:494px;top:108px;width:1px;height:15px;background:#fff"></div>
<div class="a" style="left:494px;top:123px;width:96px;height:1px;background:#404040"></div>
<div class="a" style="left:495px;top:122px;width:94px;height:1px;background:#808080"></div>
<div class="a" style="left:589px;top:108px;width:1px;height:16px;background:#404040"></div>
<div class="a" style="left:588px;top:109px;width:1px;height:14px;background:#808080"></div>

<div class="a" style="left:590px;top:108px;width:120px;height:16px;background:#d4d0c8"></div>
<div class="a" style="left:590px;top:108px;width:119px;height:1px;background:#fff"></div>
<div class="a" style="left:590px;top:108px;width:1px;height:15px;background:#fff"></div>
<div class="a" style="left:590px;top:123px;width:120px;height:1px;background:#404040"></div>
<div class="a" style="left:591px;top:122px;width:118px;height:1px;background:#808080"></div>
<div class="a" style="left:709px;top:108px;width:1px;height:16px;background:#404040"></div>
<div class="a" style="left:708px;top:109px;width:1px;height:14px;background:#808080"></div>

<div class="a" style="left:710px;top:108px;width:80px;height:16px;background:#d4d0c8"></div>
<div class="a" style="left:710px;top:108px;width:79px;height:1px;background:#fff"></div>
<div class="a" style="left:710px;top:108px;width:1px;height:15px;background:#fff"></div>
<div class="a" style="left:710px;top:123px;width:80px;height:1px;background:#404040"></div>
<div class="a" style="left:711px;top:122px;width:78px;height:1px;background:#808080"></div>
<div class="t" style="left:319px;top:111px;">Name</div>
<div class="t" style="left:560px;top:111px;width:24px;text-align:right">Size</div>
<div class="t" style="left:595px;top:111px;">Type</div>
<svg class="a" style="left:629px;top:113px" width="8" height="5"><path d="M3.5 0.5 L7 4.5 L0 4.5 Z" fill="#a0a0a0"/></svg>
<div class="t" style="left:715px;top:111px;letter-spacing:-0.1px">Date Modified</div>
<div class="clip" style="left:314px;top:124px;width:476px;height:455px"><div class="a" style="left:-314px;top:-124px;width:795px;height:596px"><svg class="a" style="left:319px;top:125px" width="16" height="16" viewBox="0 0 16 16"><path d="M0.5 0.5 L11.5 0.5 L13.5 2.5 L13.5 15.5 L0.5 15.5 Z" fill="#fff" stroke="#6c6c6c"/><circle cx="11.5" cy="2" r="1.2" fill="#fff" stroke="#808080" stroke-width="0.6"/><rect x="2.5" y="5" width="9" height="8" fill="#fffff4"/><rect x="2.5" y="4.5" width="9" height="2.5" fill="#101088"/><rect x="3.3" y="5.2" width="1" height="1" fill="#d0d0ff"/><rect x="2.5" y="12" width="9" height="1.4" fill="#101010"/><path d="M6 8 L4.2 9.6 L6 11.2" stroke="#a03020" stroke-width="1.2" fill="none"/><path d="M8.8 7.8 L10.6 9.6 L8.8 11.4 L7 9.6 Z" fill="#207898"/></svg>
<div class="t" style="left:335px;top:128px;">9by2 low bmp.im</div>
<div class="t" style="left:523px;top:128px;width:60px;text-align:right">2 KB</div>
<div class="t" style="left:595px;top:128px;">IM File</div>
<div class="t" style="left:715px;top:128px;">8/2/2009 3:20 PM</div>
<svg class="a" style="left:318px;top:142px" width="16" height="16" viewBox="0 0 16 16"><path d="M3.5 0.5 L10.5 0.5 L14.5 4.5 L14.5 15.5 L3.5 15.5 Z" fill="#eceef2" stroke="#b4b8c4"/><defs><radialGradient id="sph" cx="55%" cy="50%" r="55%"><stop offset="0" stop-color="#9cc4ff"/><stop offset="0.45" stop-color="#2a4cd0"/><stop offset="0.85" stop-color="#0c1450"/><stop offset="1" stop-color="#202020"/></radialGradient></defs><circle cx="5.5" cy="8.5" r="5.2" fill="url(#sph)"/></svg>
<div class="t" style="left:335px;top:145px;">reskin240.jpg</div>
<div class="t" style="left:523px;top:145px;width:60px;text-align:right">18 KB</div>
<div class="t" style="left:595px;top:145px;">Paint Shop Pro Phot...</div>
<div class="t" style="left:715px;top:145px;">8/2/2009 3:20 PM</div>
<svg class="a" style="left:318px;top:159px" width="16" height="16" viewBox="0 0 16 16"><path d="M3.5 0.5 L10.5 0.5 L14.5 4.5 L14.5 15.5 L3.5 15.5 Z" fill="#8a8cc4" stroke="#6a6ca8"/><defs><radialGradient id="sph2" cx="55%" cy="50%" r="55%"><stop offset="0" stop-color="#5a7ce0"/><stop offset="0.45" stop-color="#1a2c90"/><stop offset="0.85" stop-color="#081040"/><stop offset="1" stop-color="#101020"/></radialGradient></defs><circle cx="5.5" cy="8.5" r="5.2" fill="url(#sph2)"/></svg>
<div class="a" style="left:334px;top:159px;width:87px;height:17px;background:#0a246a"></div>
<div class="t" style="left:335px;top:162px;color:#fff">sign128x32.bmp</div>
<div class="t" style="left:523px;top:162px;width:60px;text-align:right">13 KB</div>
<div class="t" style="left:595px;top:162px;">Paint Shop Pro Phot...</div>
<div class="t" style="left:715px;top:162px;">8/2/2009 3:20 PM</div>
<svg class="a" style="left:319px;top:177px" width="14" height="16" viewBox="0 0 14 16"><path d="M1.5 1.5 L11.5 1.5 L11.5 13.5 L1.5 13.5 Z" fill="#fff" stroke="#787890"/><path d="M2.5 14.5 L12.5 14.5 L12.5 2.5" stroke="#b4b4b4" fill="none"/><rect x="2.6" y="0" width="1" height="2.6" fill="#78783c"/><rect x="4.6" y="0" width="1" height="2.6" fill="#78783c"/><rect x="6.6" y="0" width="1" height="2.6" fill="#78783c"/><rect x="8.6" y="0" width="1" height="2.6" fill="#78783c"/><path d="M2 2 L11 2" stroke="#c8c890" stroke-width="0.8"/><path d="M4 5.5 L8 5.5 M4 7.5 L9.5 7.5 M4 9.5 L9.5 9.5 M4 11.5 L6 11.5" stroke="#606068"/></svg>
<div class="t" style="left:335px;top:179px;">config.txt</div>
<div class="t" style="left:523px;top:179px;width:60px;text-align:right">2 KB</div>
<div class="t" style="left:595px;top:179px;">Text Document</div>
<div class="t" style="left:715px;top:179px;">8/2/2009 3:20 PM</div>
<svg class="a" style="left:319px;top:194px" width="14" height="16" viewBox="0 0 14 16"><path d="M1.5 1.5 L11.5 1.5 L11.5 13.5 L1.5 13.5 Z" fill="#fff" stroke="#787890"/><path d="M2.5 14.5 L12.5 14.5 L12.5 2.5" stroke="#b4b4b4" fill="none"/><rect x="2.6" y="0" width="1" height="2.6" fill="#78783c"/><rect x="4.6" y="0" width="1" height="2.6" fill="#78783c"/><rect x="6.6" y="0" width="1" height="2.6" fill="#78783c"/><rect x="8.6" y="0" width="1" height="2.6" fill="#78783c"/><path d="M2 2 L11 2" stroke="#c8c890" stroke-width="0.8"/><path d="M4 5.5 L8 5.5 M4 7.5 L9.5 7.5 M4 9.5 L9.5 9.5 M4 11.5 L6 11.5" stroke="#606068"/></svg>
<div class="t" style="left:335px;top:196px;">sign128x32.texture.txt</div>
<div class="t" style="left:523px;top:196px;width:60px;text-align:right">1 KB</div>
<div class="t" style="left:595px;top:196px;">Text Document</div>
<div class="t" style="left:715px;top:196px;">8/2/2009 3:20 PM</div></div></div>
<div class="a chk" style="left:314px;top:579px;width:476px;height:16px;"></div>
<div class="a" style="left:314px;top:579px;width:16px;height:16px;background:#d4d0c8"></div><div class="a" style="left:315px;top:580px;width:13px;height:1px;background:#ffffff"></div><div class="a" style="left:315px;top:580px;width:1px;height:13px;background:#ffffff"></div><div class="a" style="left:314px;top:594px;width:16px;height:1px;background:#404040"></div><div class="a" style="left:329px;top:579px;width:1px;height:16px;background:#404040"></div><div class="a" style="left:315px;top:593px;width:14px;height:1px;background:#808080"></div><div class="a" style="left:328px;top:580px;width:1px;height:14px;background:#808080"></div>
<svg class="a" style="left:319px;top:583px" width="5" height="8"><path d="M4 0 L4 7 L0 3.5 Z" fill="#000"/></svg>
<div class="a" style="left:330px;top:579px;width:410px;height:16px;background:#d4d0c8"></div><div class="a" style="left:331px;top:580px;width:407px;height:1px;background:#ffffff"></div><div class="a" style="left:331px;top:580px;width:1px;height:13px;background:#ffffff"></div><div class="a" style="left:330px;top:594px;width:410px;height:1px;background:#404040"></div><div class="a" style="left:739px;top:579px;width:1px;height:16px;background:#404040"></div><div class="a" style="left:331px;top:593px;width:408px;height:1px;background:#808080"></div><div class="a" style="left:738px;top:580px;width:1px;height:14px;background:#808080"></div>
<div class="a" style="left:774px;top:579px;width:16px;height:16px;background:#d4d0c8"></div><div class="a" style="left:775px;top:580px;width:13px;height:1px;background:#ffffff"></div><div class="a" style="left:775px;top:580px;width:1px;height:13px;background:#ffffff"></div><div class="a" style="left:774px;top:594px;width:16px;height:1px;background:#404040"></div><div class="a" style="left:789px;top:579px;width:1px;height:16px;background:#404040"></div><div class="a" style="left:775px;top:593px;width:14px;height:1px;background:#808080"></div><div class="a" style="left:788px;top:580px;width:1px;height:14px;background:#808080"></div>
<svg class="a" style="left:779px;top:583px" width="5" height="8"><path d="M0 0 L4 3.5 L0 7 Z" fill="#000"/></svg>
<div class="a" style="left:418px;top:172px;width:133px;height:315px;background:#d4d0c8;box-shadow:none"></div>
<div class="a" style="left:419px;top:173px;width:130px;height:1px;background:#fff"></div>
<div class="a" style="left:419px;top:173px;width:1px;height:312px;background:#fff"></div>
<div class="a" style="left:419px;top:485px;width:131px;height:1px;background:#808080"></div>
<div class="a" style="left:549px;top:173px;width:1px;height:313px;background:#808080"></div>
<div class="a" style="left:418px;top:486px;width:133px;height:1px;background:#404040"></div>
<div class="a" style="left:550px;top:172px;width:1px;height:315px;background:#404040"></div>
<div class="t" style="left:437px;top:177px;color:#000;font-weight:bold;">Open</div>
<div class="a" style="left:421px;top:192px;width:127px;height:17px;background:#0a246a"></div>
<div class="t" style="left:437px;top:194px;color:#fff;">Edit with GIMP</div>
<div class="t" style="left:437px;top:211px;color:#000;">Edit</div>
<div class="t" style="left:437px;top:228px;color:#000;">Print</div>
<div class="t" style="left:437px;top:245px;color:#000;">Preview</div>
<div class="a" style="left:422px;top:263px;width:124px;height:1px;background:#808080"></div>
<div class="a" style="left:422px;top:264px;width:124px;height:1px;background:#fff"></div>
<div class="t" style="left:437px;top:271px;color:#000;">IZArc</div>
<svg class="a" style="left:538px;top:273px" width="5" height="8"><path d="M0 0 L4 4 L0 8 Z" fill="#000"/></svg>
<svg class="a" style="left:420px;top:268px" width="16" height="18" viewBox="0 0 16 18"><path d="M4 3.5 L11 3.5 Q13.5 3.5 13.5 6 L13.5 11 Q13.5 13.5 11 13.5 L4 13.5" stroke="#000" stroke-width="1.3" fill="none"/><path d="M4.5 5.2 L10.5 5.2 Q11.9 5.2 11.9 6.6 L11.9 10.4 Q11.9 11.8 10.5 11.8 L4.5 11.8" stroke="#b0b0b0" stroke-width="0.9" fill="none"/><rect x="3" y="4.4" width="1.6" height="1.4" fill="#000"/><rect x="3" y="11.2" width="1.6" height="1.4" fill="#000"/><rect x="4.5" y="6.2" width="6.5" height="5" fill="#ece4f4"/><rect x="4" y="6.2" width="1.3" height="5" fill="#000"/><rect x="5.6" y="6.8" width="3.2" height="3.6" fill="#e85020"/><rect x="8.4" y="13.5" width="1.6" height="1.8" fill="#000"/><rect x="5" y="15" width="8" height="1.3" fill="#000"/></svg>
<div class="a" style="left:422px;top:289px;width:124px;height:1px;background:#808080"></div>
<div class="a" style="left:422px;top:290px;width:124px;height:1px;background:#fff"></div>
<div class="t" style="left:437px;top:297px;color:#000;">Scan for Viruses...</div>
<div class="t" style="left:437px;top:314px;color:#000;">Open With</div>
<svg class="a" style="left:538px;top:316px" width="5" height="8"><path d="M0 0 L4 4 L0 8 Z" fill="#000"/></svg>
<div class="a" style="left:422px;top:332px;width:124px;height:1px;background:#808080"></div>
<div class="a" style="left:422px;top:333px;width:124px;height:1px;background:#fff"></div>
<div class="t" style="left:437px;top:340px;color:#000;">Send To</div>
<svg class="a" style="left:538px;top:342px" width="5" height="8"><path d="M0 0 L4 4 L0 8 Z" fill="#000"/></svg>
<div class="a" style="left:422px;top:358px;width:124px;height:1px;background:#808080"></div>
<div class="a" style="left:422px;top:359px;width:124px;height:1px;background:#fff"></div>
<div class="t" style="left:437px;top:366px;color:#000;">Cut</div>
<div class="t" style="left:437px;top:383px;color:#000;">Copy</div>
<div class="a" style="left:422px;top:401px;width:124px;height:1px;background:#808080"></div>
<div class="a" style="left:422px;top:402px;width:124px;height:1px;background:#fff"></div>
<div class="t" style="left:437px;top:409px;color:#000;">Create Shortcut</div>
<div class="t" style="left:437px;top:426px;color:#000;">Delete</div>
<div class="t" style="left:437px;top:443px;color:#000;">Rename</div>
<div class="a" style="left:422px;top:461px;width:124px;height:1px;background:#808080"></div>
<div class="a" style="left:422px;top:462px;width:124px;height:1px;background:#fff"></div>
<div class="t" style="left:437px;top:469px;color:#000;">Properties</div>
</body></html>
